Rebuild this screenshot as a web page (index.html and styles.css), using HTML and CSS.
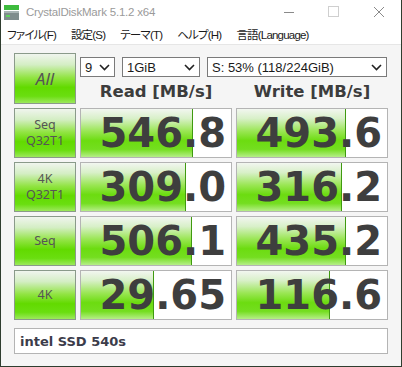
FILE: index.html
```html
<!DOCTYPE html>
<html lang="ja">
<head>
    <meta charset="UTF-8">
    <title>CrystalDiskMark 5.1.2 x64</title>
    <link rel="stylesheet" href="styles.css">
</head>
<body>
    <div class="window">
        <div class="titlebar">
            <svg class="app-icon" width="16" height="16" viewBox="0 0 16 16">
                <rect x="0" y="0" width="15" height="5" fill="#3dbb3d"/>
                <rect x="0" y="6" width="15" height="9" fill="#7f8c8c"/>
                <rect x="0" y="6" width="15" height="2" fill="#a9b4b4"/>
                <rect x="2" y="10" width="4" height="2" fill="#5fd35f"/>
            </svg>
            <span class="title">CrystalDiskMark 5.1.2 x64</span>
            <div class="controls">
                <svg width="12" height="12" viewBox="0 0 12 12"><line x1="1" y1="6.5" x2="11" y2="6.5" stroke="#8a8a8a" stroke-width="1"/></svg>
                <svg width="12" height="12" viewBox="0 0 12 12"><rect x="0.5" y="0.5" width="10" height="10" fill="none" stroke="#cfcfcf" stroke-width="1"/></svg>
                <svg width="12" height="12" viewBox="0 0 12 12"><path d="M1 1 L11 11 M11 1 L1 11" stroke="#8a8a8a" stroke-width="1" fill="none"/></svg>
            </div>
        </div>

        <div class="menubar">
            <span>ファイル(F)</span>
            <span>設定(S)</span>
            <span>テーマ(T)</span>
            <span>ヘルプ(H)</span>
            <span>言語(Language)</span>
        </div>

        <div class="panel">
            <div class="tile all">All</div>
            <div class="top-controls">
                <div class="selects">
                    <div class="dropdown w-count">9<svg width="11" height="7" viewBox="0 0 11 7"><path d="M1 1 L5.5 5.5 L10 1" stroke="#222" stroke-width="1.6" fill="none"/></svg></div>
                    <div class="dropdown w-size">1GiB<svg width="11" height="7" viewBox="0 0 11 7"><path d="M1 1 L5.5 5.5 L10 1" stroke="#222" stroke-width="1.6" fill="none"/></svg></div>
                    <div class="dropdown w-drive">S: 53% (118/224GiB)<svg width="11" height="7" viewBox="0 0 11 7"><path d="M1 1 L5.5 5.5 L10 1" stroke="#222" stroke-width="1.6" fill="none"/></svg></div>
                </div>
                <div class="headers">
                    <div>Read [MB/s]</div>
                    <div>Write [MB/s]</div>
                </div>
            </div>

            <div class="tile">Seq<br>Q32T1</div>
            <div class="result"><div class="bar" style="width: 74%"></div><span>546.8</span></div>
            <div class="result"><div class="bar" style="width: 72%"></div><span>493.6</span></div>

            <div class="tile">4K<br>Q32T1</div>
            <div class="result"><div class="bar" style="width: 69%"></div><span>309.0</span></div>
            <div class="result"><div class="bar" style="width: 69%"></div><span>316.2</span></div>

            <div class="tile">Seq</div>
            <div class="result"><div class="bar" style="width: 73%"></div><span>506.1</span></div>
            <div class="result"><div class="bar" style="width: 72%"></div><span>435.2</span></div>

            <div class="tile">4K</div>
            <div class="result"><div class="bar" style="width: 48%"></div><span>29.65</span></div>
            <div class="result"><div class="bar" style="width: 61%"></div><span>116.6</span></div>

            <div class="comment">intel SSD 540s</div>
        </div>
    </div>
</body>
</html>
```

FILE: styles.css
```css
body {
    margin: 0;
    padding: 0;
    background-color: #2c3a2c;
    font-family: 'Liberation Sans', sans-serif;
}
.window {
    width: 400px;
    height: 366px;
    border: 1px solid #2f3d2f;
    border-top: none;
    background: #f5f5f5;
    display: flex;
    flex-direction: column;
}
.titlebar {
    height: 24px;
    background: white;
    display: flex;
    align-items: center;
    padding-left: 3px;
}
.app-icon {
    margin-right: 6px;
    margin-top: 1px;
}
.title {
    font-size: 11.5px;
    color: #9a9a9a;
    font-family: 'Liberation Sans', sans-serif;
    letter-spacing: -0.2px;
}
.controls {
    margin-left: auto;
    display: flex;
    gap: 33px;
    padding-right: 16px;
}
.menubar {
    height: 20px;
    background: white;
    display: flex;
    align-items: center;
    gap: 15px;
    padding-left: 6px;
    font-family: 'Liberation Sans', 'Noto Sans CJK JP', sans-serif;
    font-feature-settings: "palt";
    font-size: 11.5px;
    letter-spacing: -0.8px;
    color: #1a1a1a;
    border-bottom: 1px solid #e6e6e6;
}
.panel {
    display: grid;
    grid-template-columns: 62px 152px 152px;
    grid-template-rows: 51px 50px 50px 50px 50px 30px;
    gap: 4px;
    padding: 8px 12px 0 13px;
}
.tile {
    border: 1px solid #8a9a8a;
    background: linear-gradient(#f0f5ee 0%, #d4eec4 22%, #92e444 48%, #62da00 68%, #6ade10 86%, #9ce85c 100%);
    color: #555;
    font-family: 'Noto Sans', sans-serif;
    font-size: 12.5px;
    line-height: 16px;
    display: flex;
    align-items: center;
    justify-content: center;
    text-align: center;
    box-sizing: border-box;
}
.tile.all {
    font-size: 17px;
    font-style: italic;
}
.top-controls {
    grid-column: 2 / 4;
    display: flex;
    flex-direction: column;
}
.selects {
    display: flex;
    gap: 7px;
    margin-top: 4px;
}
.dropdown {
    height: 20px;
    box-sizing: border-box;
    border: 1px solid #7a7a7a;
    background: white;
    font-size: 13px;
    color: #1a1a1a;
    display: flex;
    align-items: center;
    justify-content: space-between;
    padding: 0 4px 0 4px;
}
.w-count { width: 35px; }
.w-size { width: 78px; }
.w-drive { width: 180px; }
.headers {
    display: grid;
    grid-template-columns: 152px 152px;
    gap: 4px;
    margin-top: 5px;
    font-family: 'DejaVu Sans', sans-serif;
    font-weight: bold;
    font-size: 16.5px;
    color: #3c3c3c;
    text-align: center;
}
.result {
    position: relative;
    border: 1px solid #b4b4b4;
    background: white;
    box-sizing: border-box;
    text-align: right;
    font-family: 'DejaVu Sans', sans-serif;
    font-weight: bold;
    font-size: 40px;
    line-height: 48px;
    color: #3e3e3e;
    padding-right: 5px;
}
.bar {
    position: absolute;
    left: 0;
    top: 0;
    bottom: 0;
    background: linear-gradient(#f2f6f0 0%, #d8f0c8 20%, #9ae654 46%, #6cdc10 66%, #74de20 84%, #b6ee88 100%);
    border-right: 1px solid #3f9a10;
}
.result span {
    position: relative;
}
.comment {
    grid-column: 1 / 4;
    margin-top: 4px;
    border: 1px solid #b4b4b4;
    background: white;
    box-sizing: border-box;
    font-family: 'DejaVu Sans', sans-serif;
    font-weight: bold;
    font-size: 13px;
    color: #3c3c4a;
    display: flex;
    align-items: center;
    padding-left: 5px;
}
```
